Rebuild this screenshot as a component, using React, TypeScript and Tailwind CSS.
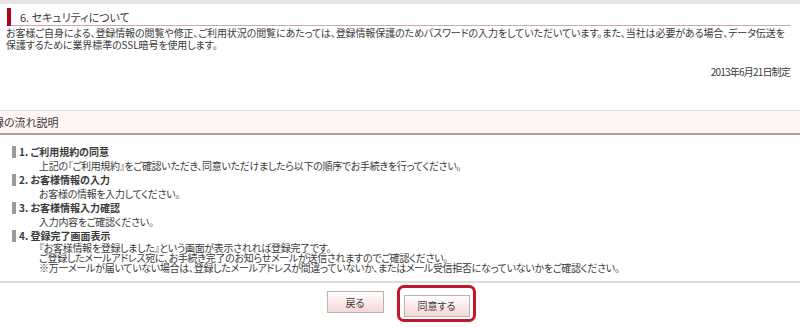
import React from 'react';

const steps = [
  {
    title: '1. ご利用規約の同意',
    lines: ['上記の『ご利用規約』をご確認いただき、同意いただけましたら以下の順序でお手続きを行ってください。'],
  },
  {
    title: '2. お客様情報の入力',
    lines: ['お客様の情報を入力してください。'],
  },
  {
    title: '3. お客様情報入力確認',
    lines: ['入力内容をご確認ください。'],
  },
  {
    title: '4. 登録完了画面表示',
    lines: [
      '『お客様情報を登録しました』という画面が表示されれば登録完了です。',
      'ご登録したメールアドレス宛に、お手続き完了のお知らせメールが送信されますのでご確認ください。',
      '※万一メールが届いていない場合は、登録したメールアドレスが間違っていないか、またはメール受信拒否になっていないかをご確認ください。',
    ],
  },
];

export default function App() {
  return (
    <div className="w-[800px] h-[327px] overflow-hidden bg-white text-[#3a3a3a] font-['Noto_Sans_CJK_JP',sans-serif] [font-feature-settings:'palt']">
      <div className="h-[4px] bg-[#e6e6e6]" />

      {/* section 6 */}
      <div className="mt-[4px] ml-[7px] mr-[10px] h-[18px] flex items-center border-b border-[#c9a9a9]">
        <div className="w-[4px] h-[18px] bg-[#b3001b]" />
        <span className="ml-[9px] text-[11px] leading-[18px]">6. セキュリティについて</span>
      </div>
      <p className="mt-[1px] px-[6px] text-[10px] leading-[12px] whitespace-nowrap tracking-[-0.1px]">
        お客様ご自身による、登録情報の閲覧や修正、ご利用状況の閲覧にあたっては、登録情報保護のためパスワードの入力をしていただいています。また、当社は必要がある場合、データ伝送を
        <br />
        保護するために業界標準のSSL暗号を使用します。
      </p>
      <p className="mt-[15px] pr-[10px] text-right text-[10px] leading-[12px] tracking-[-0.8px]">2013年6月21日制定</p>

      {/* flow section */}
      <div className="mt-[32px] border-t border-[#dddddd] bg-[#fff6f4] border-b-2 border-b-[#b89a9a] h-[25px] flex items-center overflow-hidden">
        <span className="-ml-[18px] text-[11px] whitespace-nowrap">登録の流れ説明</span>
      </div>

      <ul className="mt-[10px] pl-[12px] text-[10px]">
        {steps.map((s) => (
          <li key={s.title}>
            <div className="flex items-center h-[14px]">
              <span className="w-[4px] h-[12px] bg-[#9a9a9a]" />
              <span className="ml-[3px] font-bold leading-[14px]">{s.title}</span>
            </div>
            <div
              className={`pl-[27px] whitespace-nowrap tracking-[-0.3px] ${
                s.lines.length > 1 ? 'leading-[10px]' : 'leading-[14px]'
              }`}
            >
              {s.lines.map((l) => (
                <div key={l}>{l}</div>
              ))}
            </div>
          </li>
        ))}
      </ul>

      <div className="mt-[8px] h-[2px] bg-[#dddddd]" />

      <div className="mt-[8px] flex justify-center gap-[20px] pr-[4px]">
        <button className="w-[57px] h-[22px] border border-[#b5b5b5] bg-gradient-to-b from-white to-[#f6d6d6] text-[10px]">
          戻る
        </button>
        <div className="relative">
          <button className="w-[66px] h-[22px] border border-[#b5b5b5] bg-gradient-to-b from-white to-[#f6d6d6] text-[10px]">
            同意する
          </button>
          <div className="absolute -left-[7px] -top-[6px] -right-[6px] -bottom-[5px] rounded-[7px] border-[3px] border-[#c4162a]" />
        </div>
      </div>
    </div>
  );
}
